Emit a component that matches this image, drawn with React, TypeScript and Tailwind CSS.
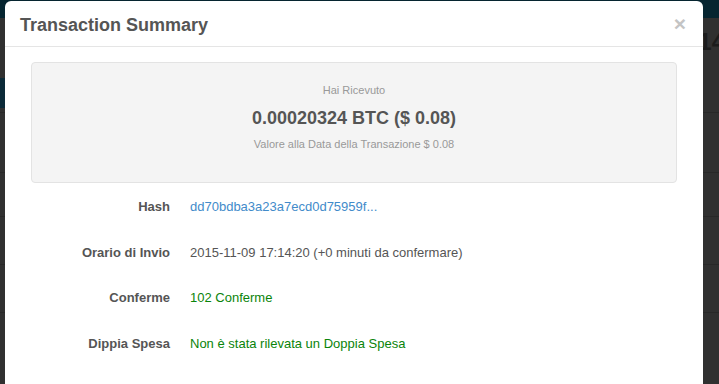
const rows = [
  { label: "Hash", value: "dd70bdba3a23a7ecd0d75959f...", color: "text-[#428bca]" },
  { label: "Orario di Invio", value: "2015-11-09 17:14:20 (+0 minuti da confermare)", color: "text-[#555]" },
  { label: "Conferme", value: "102 Conferme", color: "text-[#0a840a]" },
  { label: "Dippia Spesa", value: "Non è stata rilevata un Doppia Spesa", color: "text-[#0a840a]" },
];

const App = () => {
  return (
    <div
      className="relative w-[719px] h-[384px] overflow-hidden bg-[#303030]"
      style={{ fontFamily: '"Liberation Sans", Arial, sans-serif' }}
    >
      {/* page behind the backdrop */}
      <div className="h-[18px] bg-[#062530]" />
      <div className="flex h-[60px] justify-end items-start pt-[12px] pr-0 overflow-hidden">
        <span className="text-[24px] font-bold text-[#1c1c1c] leading-none -mr-[6px]">14</span>
      </div>
      <div className="flex flex-col">
        <div className="h-[30px] w-[5px] bg-[#0b2a38]" />
        <div className="h-[5px] border-b border-[#282828]" />
        <div className="h-[60px] border-b border-[#282828]" />
        <div className="h-[44px] border-b border-[#282828]" />
        <div className="h-[48px] border-b border-[#282828]" />
        <div className="h-[48px] border-b border-[#282828]" />
      </div>

      {/* modal */}
      <div className="absolute left-[5px] top-[1px] w-[698px] h-[420px] bg-white rounded-[6px]">
        <div className="flex items-center justify-between h-[46px] px-[15px] border-b border-[#e5e5e5]">
          <h4 className="text-[18px] font-bold text-[#555] leading-[20px] pt-[2px]">Transaction Summary</h4>
          <span className="text-[21px] font-bold text-[#c4c4c4] leading-none pr-[2px]">×</span>
        </div>
        <div className="px-[26px] pt-[15px]">
          <div className="flex flex-col items-center h-[121px] bg-[#f4f4f4] border border-[#e3e3e3] rounded-[4px] pt-[20px]">
            <p className="text-[11px] text-[#999] leading-[14px]">Hai Ricevuto</p>
            <p className="text-[18px] font-bold text-[#555] leading-[22px] mt-[10px]">0.00020324 BTC ($ 0.08)</p>
            <p className="text-[11px] text-[#999] leading-[14px] mt-[8px]">Valore alla Data della Transazione $ 0.08</p>
          </div>
          <div className="flex flex-col mt-[1px]">
            {rows.map((row, idx) => (
              <div key={idx} className="flex items-center gap-[20px] h-[45.5px] text-[13px]">
                <span className="w-[139px] text-right font-bold text-[#555]">{row.label}</span>
                <span className={row.color}>{row.value}</span>
              </div>
            ))}
          </div>
        </div>
      </div>
    </div>
  );
};

export default App;
